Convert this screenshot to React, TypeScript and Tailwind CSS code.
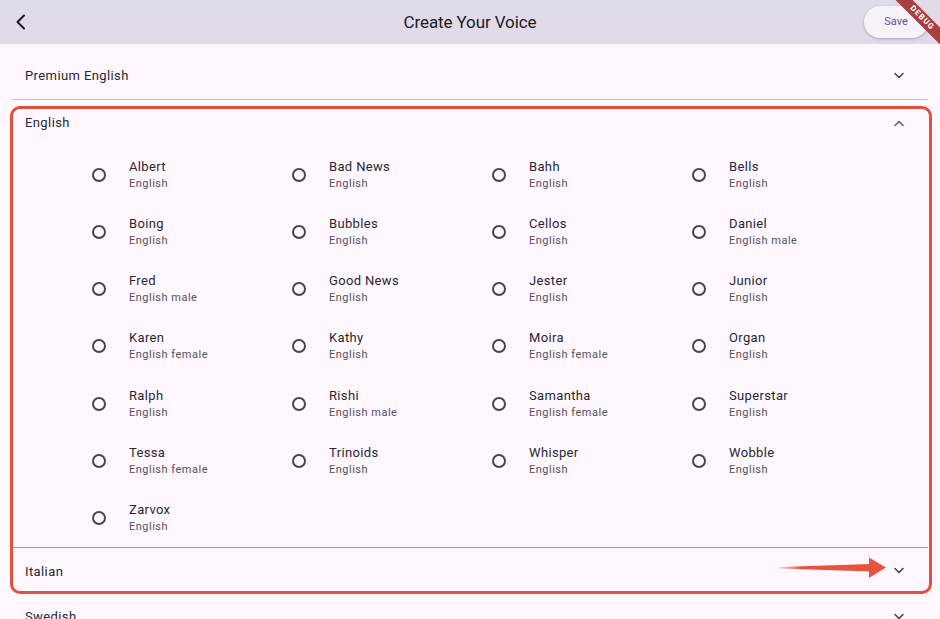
type Voice = { name: string; lang: string };

const VOICES: Voice[] = [
  { name: "Albert", lang: "English" },
  { name: "Bad News", lang: "English" },
  { name: "Bahh", lang: "English" },
  { name: "Bells", lang: "English" },
  { name: "Boing", lang: "English" },
  { name: "Bubbles", lang: "English" },
  { name: "Cellos", lang: "English" },
  { name: "Daniel", lang: "English male" },
  { name: "Fred", lang: "English male" },
  { name: "Good News", lang: "English" },
  { name: "Jester", lang: "English" },
  { name: "Junior", lang: "English" },
  { name: "Karen", lang: "English female" },
  { name: "Kathy", lang: "English" },
  { name: "Moira", lang: "English female" },
  { name: "Organ", lang: "English" },
  { name: "Ralph", lang: "English" },
  { name: "Rishi", lang: "English male" },
  { name: "Samantha", lang: "English female" },
  { name: "Superstar", lang: "English" },
  { name: "Tessa", lang: "English female" },
  { name: "Trinoids", lang: "English" },
  { name: "Whisper", lang: "English" },
  { name: "Wobble", lang: "English" },
  { name: "Zarvox", lang: "English" },
];

function Chevron({ up = false }: { up?: boolean }) {
  return (
    <svg width="12" height="8" viewBox="0 0 12 8" fill="none">
      <polyline
        points={up ? "2,6.5 6,2.5 10,6.5" : "2,1.5 6,5.5 10,1.5"}
        stroke={up ? "#6750a4" : "#49454f"}
        strokeWidth="1.6"
        strokeLinecap="round"
        strokeLinejoin="round"
      />
    </svg>
  );
}

function TileHeader({ title, open = false, h }: { title: string; open?: boolean; h: string }) {
  return (
    <div className={`flex items-center justify-between pl-[13px] pr-[23px] ${h}`}>
      <span className="text-[13px] tracking-[0.4px] text-[#2a272e]">{title}</span>
      <Chevron up={open} />
    </div>
  );
}

function VoiceOption({ voice }: { voice: Voice }) {
  return (
    <div className="flex items-center h-[57.25px] pl-[12px]">
      <span className="w-[14px] h-[14px] rounded-full border-2 border-[#49454f] shrink-0" />
      <div className="ml-[23px] flex flex-col -mt-[1px]">
        <span className="text-[13px] leading-[18px] tracking-[0.35px] text-[#2a272e]">{voice.name}</span>
        <span className="text-[11px] leading-[15px] tracking-[0.5px] text-[#55515b]">{voice.lang}</span>
      </div>
    </div>
  );
}

export default function App() {
  return (
    <div className="relative w-[940px] h-[619px] overflow-hidden bg-[#fef7ff] font-['Roboto',sans-serif]">
      {/* app bar */}
      <header className="grid grid-cols-[1fr_auto_1fr] items-center h-[44px] bg-[#e0dae9]">
        <div className="pl-[14px]">
          <svg width="16" height="20" viewBox="0 0 16 20" fill="none">
            <polyline points="10,3.5 3.5,10 10,16.5" stroke="#1d1b20" strokeWidth="2" strokeLinecap="round" strokeLinejoin="round" />
          </svg>
        </div>
        <h1 className="text-[17px] text-[#1d1b20] tracking-[-0.1px] pt-[1px]">Create Your Voice</h1>
        <div className="flex justify-end pr-[12px]">
          <button className="w-[64px] h-[32px] rounded-full bg-[#f7f2fa] text-[11px] text-[#6750a4] shadow-[0_1px_3px_rgba(0,0,0,0.25)]">
            Save
          </button>
        </div>
      </header>

      <main className="px-[12px] pt-[9px]">
        <TileHeader title="Premium English" h="h-[46px]" />
        <div className="h-px bg-[#c8c4cc]" />

        <section>
          <TileHeader title="English" open h="h-[46px]" />
          <div className="grid grid-cols-[repeat(4,200px)] pl-[68px]">
            {VOICES.map((v) => (
              <VoiceOption key={v.name} voice={v} />
            ))}
          </div>
        </section>
        <div className="h-px bg-[#9f9ca3]" />

        <TileHeader title="Italian" h="h-[47px]" />
        <TileHeader title="Swedish" h="h-[44px]" />
        <div className="h-px bg-[#b8b4bb]" />
      </main>

      {/* annotation frame */}
      <div className="absolute left-[10px] top-[106px] w-[922px] h-[488px] rounded-[10px] border-[3px] border-[#e44e3c] pointer-events-none" />

      {/* annotation arrow */}
      <svg className="absolute left-[776px] top-[556px]" width="112" height="24" viewBox="0 0 112 24">
        <defs>
          <linearGradient id="tail" x1="0" x2="1" y1="0" y2="0">
            <stop offset="0" stopColor="#e65440" stopOpacity="0.15" />
            <stop offset="0.25" stopColor="#e65440" stopOpacity="1" />
          </linearGradient>
        </defs>
        <polygon points="2,11 95,8 95,15.5 2,12.5" fill="url(#tail)" />
        <polygon points="93,1.5 110,11.5 93,22" fill="#e65440" />
      </svg>

      {/* debug banner */}
      <div className="absolute left-[882px] top-[12px] w-[80px] h-[12px] rotate-45 bg-[#a93d3f] flex items-center justify-center">
        <span className="text-[8px] leading-none font-bold tracking-[1px] text-white">DEBUG</span>
      </div>
    </div>
  );
}
